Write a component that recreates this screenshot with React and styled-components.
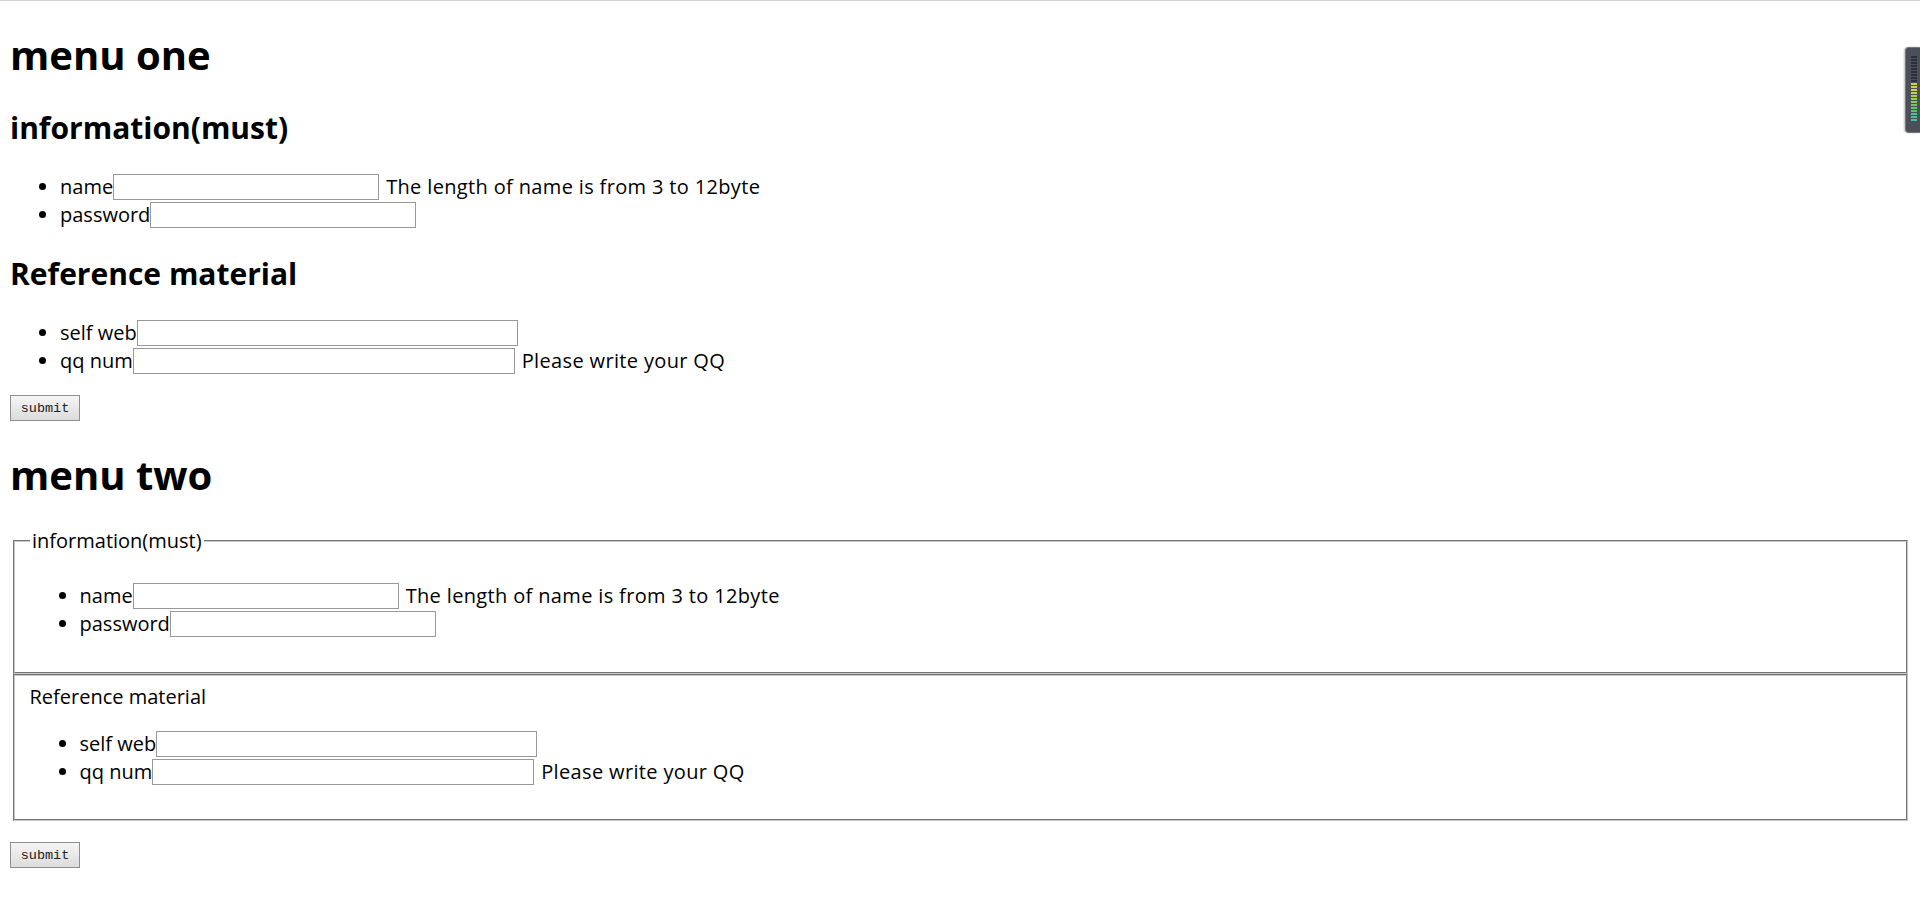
import React from "react";
import styled, { createGlobalStyle } from "styled-components";

const GlobalStyle = createGlobalStyle`
  html, body {
    margin: 0;
    padding: 0;
    background: #ffffff;
  }
  body {
    font-family: "Open Sans", "Noto Sans", "Noto Sans CJK SC", sans-serif;
    color: #000000;
  }
`;

const TopRule = styled.div`
  height: 1px;
  background: #d2d2d2;
`;

const Page = styled.div`
  padding: 0 10px 38px;
`;

const Title = styled.h1`
  font-size: 40px;
  font-weight: 700;
  line-height: 53px;
  margin: 27px 0;
`;

const SubTitle = styled.h2`
  font-size: 30px;
  font-weight: 700;
  line-height: 40px;
  margin: 25px 0;
`;

const Form = styled.form`
  display: block;
  margin: 0;
`;

const List = styled.ul`
  margin: 20px 0;
  padding-left: 50px;
  list-style: disc;
`;

const Item = styled.li`
  font-size: 20px;
  line-height: 28px;
  height: 28px;
  white-space: nowrap;
`;

const Field = styled.input`
  box-sizing: border-box;
  width: ${(p) => p.$w}px;
  height: 26px;
  margin: 1px 0;
  padding: 1px 3px;
  vertical-align: top;
  border: 1px solid #999999;
  border-radius: 0;
  background: #ffffff;
  font-family: inherit;
  font-size: 16px;
  outline: none;
`;

const Hint = styled.span`
  margin-left: 7px;
  letter-spacing: 0.35px;
`;

const Submit = styled.button`
  display: block;
  box-sizing: border-box;
  width: 70px;
  height: 26px;
  margin: ${(p) => p.$top}px 0 0;
  padding: 0;
  border: 1px solid #8e8e8e;
  border-radius: 0;
  background: linear-gradient(#f5f5f5, #dcdcdc);
  font-family: "Liberation Mono", "DejaVu Sans Mono", monospace;
  font-size: 13.5px;
  color: #222222;
`;

const Group = styled.fieldset`
  margin: 0 2.5px;
  padding: 8px 15px 13.5px;
  border: 2px groove #c8c8c8;
  min-width: 0;
`;

const Legend = styled.legend`
  padding: 0 2.5px;
  font-size: 20px;
  line-height: 26px;
`;

const GroupTitle = styled.div`
  font-size: 20px;
  line-height: 26px;
`;

const Meter = styled.div`
  position: absolute;
  top: 47px;
  right: 0;
  width: 15px;
  height: 86px;
  box-sizing: border-box;
  background: #4b5058;
  border: 1px solid #737880;
  border-right: none;
  border-radius: 4px 0 0 4px;
  box-shadow: -1px 0 2px rgba(0, 0, 0, 0.25);
`;

const MeterBars = styled.svg`
  display: block;
`;

const infoRows = [
  { label: "name", w: 266, hint: "The length of name is from 3 to 12byte" },
  { label: "password", w: 266, type: "password" },
];

const refRows = [
  { label: "self web", w: 381 },
  { label: "qq num", w: 382, hint: "Please write your QQ" },
];

function Rows({ rows }) {
  return (
    <List>
      {rows.map((r) => (
        <Item key={r.label}>
          {r.label}
          <Field $w={r.w} type={r.type || "text"} />
          {r.hint && <Hint>{r.hint}</Hint>}
        </Item>
      ))}
    </List>
  );
}

const barColors = [
  "#2c3036", "#2c3036", "#2c3036", "#2c3036", "#2c3036", "#2c3036", "#2c3036", "#2c3036", "#2c3036",
  "#d6cf3c", "#d6cf3c", "#cfd03e", "#c8d042",
  "#a9d04c", "#98cc52", "#88ca58",
  "#72c860", "#62c666", "#56c46e",
  "#44c690", "#3cc6a0", "#36c6ac",
];

function LevelMeter() {
  return (
    <Meter>
      <MeterBars width="14" height="84" viewBox="0 0 14 84">
        {barColors.map((c, i) => (
          <rect key={i} x="5" y={8 + i * 3} width="6" height="2" fill={c} />
        ))}
      </MeterBars>
    </Meter>
  );
}

export default function App() {
  return (
    <>
      <GlobalStyle />
      <TopRule />
      <Page>
        <Title>menu one</Title>
        <Form>
          <SubTitle>information(must)</SubTitle>
          <Rows rows={infoRows} />
          <SubTitle>Reference material</SubTitle>
          <Rows rows={refRows} />
          <Submit type="button" $top={0}>submit</Submit>
        </Form>
        <Title>menu two</Title>
        <Form>
          <Group>
            <Legend>information(must)</Legend>
            <Rows rows={infoRows} />
          </Group>
          <Group>
            <GroupTitle>Reference material</GroupTitle>
            <Rows rows={refRows} />
          </Group>
          <Submit type="button" $top={21}>submit</Submit>
        </Form>
      </Page>
      <LevelMeter />
    </>
  );
}
